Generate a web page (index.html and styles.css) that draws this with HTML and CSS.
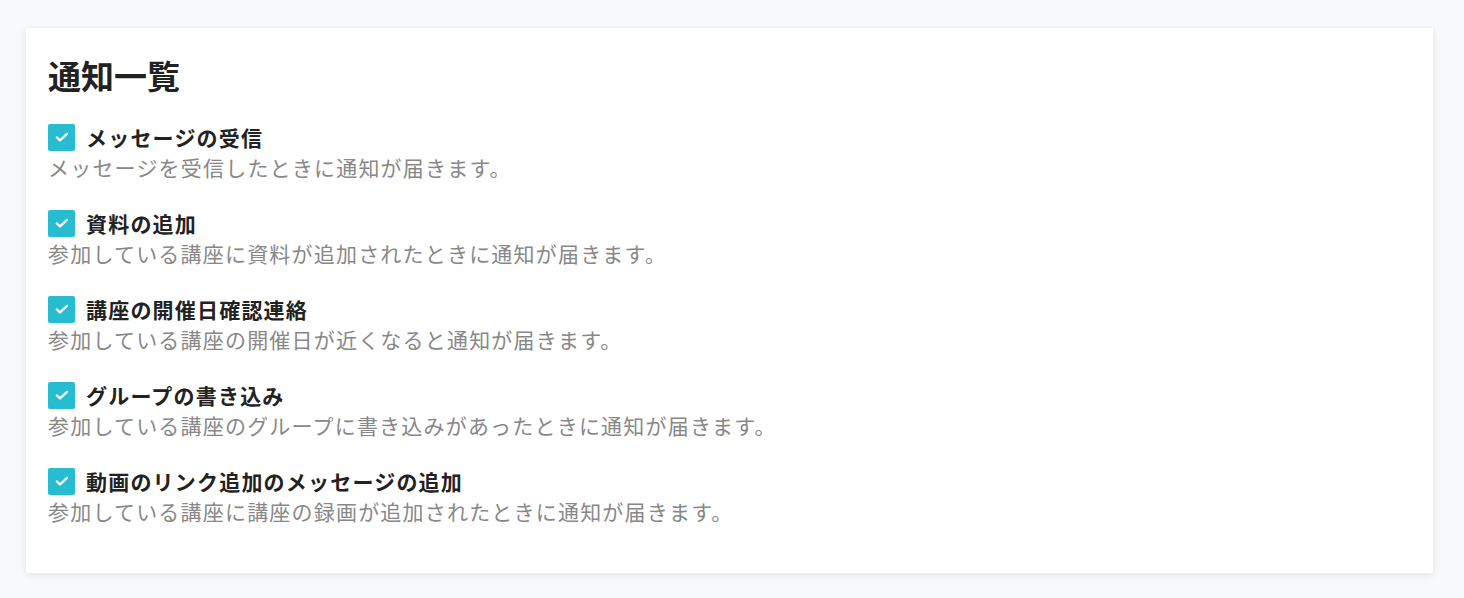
FILE: index.html
```html
<!DOCTYPE html>
<html lang="ja">
<head>
<meta charset="utf-8">
<title>通知一覧</title>
<link rel="stylesheet" href="styles.css">
</head>
<body>
<main class="page">
  <section class="card">
    <h1 class="title">通知一覧</h1>
    <ul class="list">
      <li class="item">
        <label class="label"><span class="check"><svg viewBox="0 0 14 14" width="14" height="14"><path d="M1.8 7.4 L5 10.3 L12 3.9" fill="none" stroke="#fff" stroke-width="2.3" stroke-linecap="round" stroke-linejoin="round"/></svg></span>メッセージの受信</label>
        <p class="desc">メッセージを受信したときに通知が届きます。</p>
      </li>
      <li class="item">
        <label class="label"><span class="check"><svg viewBox="0 0 14 14" width="14" height="14"><path d="M1.8 7.4 L5 10.3 L12 3.9" fill="none" stroke="#fff" stroke-width="2.3" stroke-linecap="round" stroke-linejoin="round"/></svg></span>資料の追加</label>
        <p class="desc">参加している講座に資料が追加されたときに通知が届きます。</p>
      </li>
      <li class="item">
        <label class="label"><span class="check"><svg viewBox="0 0 14 14" width="14" height="14"><path d="M1.8 7.4 L5 10.3 L12 3.9" fill="none" stroke="#fff" stroke-width="2.3" stroke-linecap="round" stroke-linejoin="round"/></svg></span>講座の開催日確認連絡</label>
        <p class="desc">参加している講座の開催日が近くなると通知が届きます。</p>
      </li>
      <li class="item">
        <label class="label"><span class="check"><svg viewBox="0 0 14 14" width="14" height="14"><path d="M1.8 7.4 L5 10.3 L12 3.9" fill="none" stroke="#fff" stroke-width="2.3" stroke-linecap="round" stroke-linejoin="round"/></svg></span>グループの書き込み</label>
        <p class="desc">参加している講座のグループに書き込みがあったときに通知が届きます。</p>
      </li>
      <li class="item">
        <label class="label"><span class="check"><svg viewBox="0 0 14 14" width="14" height="14"><path d="M1.8 7.4 L5 10.3 L12 3.9" fill="none" stroke="#fff" stroke-width="2.3" stroke-linecap="round" stroke-linejoin="round"/></svg></span>動画のリンク追加のメッセージの追加</label>
        <p class="desc">参加している講座に講座の録画が追加されたときに通知が届きます。</p>
      </li>
    </ul>
  </section>
</main>
</body>
</html>
```

FILE: styles.css
```css
html, body {
  margin: 0;
  padding: 0;
  background: #f8f9fb;
  font-family: "Noto Sans CJK JP", "Noto Sans", sans-serif;
}
.page {
  padding: 28px 31px 25px 26px;
}
.card {
  background: #fff;
  box-shadow: 0 2px 8px rgba(0, 0, 0, 0.09);
  padding: 24px 22px 47px 22px;
}
.title {
  margin: 0;
  font-size: 33px;
  line-height: 46px;
  font-weight: 700;
  letter-spacing: 0;
  color: #222;
}
.list {
  list-style: none;
  margin: 24px 0 0 0;
  padding: 0;
  display: flex;
  flex-direction: column;
  gap: 26px;
}
.item {
  display: flex;
  flex-direction: column;
}
.label {
  display: flex;
  align-items: center;
  gap: 11px;
  font-size: 21px;
  line-height: 30px;
  font-weight: 700;
  letter-spacing: 1.2px;
  color: #222;
}
.check {
  width: 27px;
  height: 27px;
  border-radius: 2px;
  background: #27bcd0;
  display: flex;
  align-items: center;
  justify-content: center;
  flex: none;
}
.desc {
  margin: 0;
  font-size: 21px;
  line-height: 30px;
  letter-spacing: 1.2px;
  color: #888;
}
```
